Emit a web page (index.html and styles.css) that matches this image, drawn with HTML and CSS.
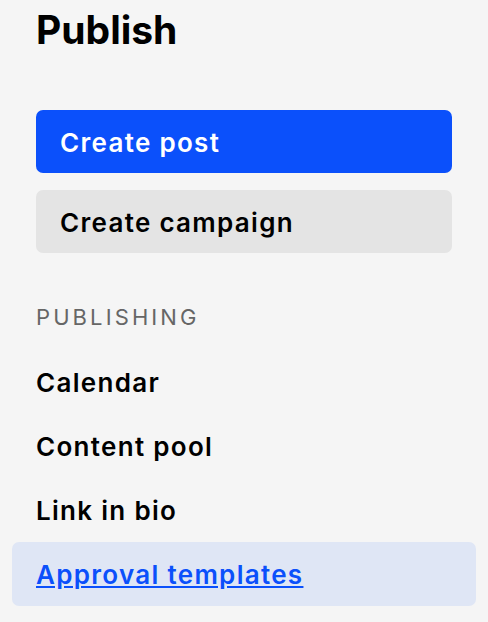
FILE: index.html
```html
<!DOCTYPE html>
<html lang="en">
<head>
    <meta charset="UTF-8">
    <meta name="viewport" content="width=device-width, initial-scale=1.0">
    <title>Publish</title>
    <link rel="stylesheet" href="styles.css">
</head>
<body>
    <div id="sidebar">
        <h1 class="title">Publish</h1>

        <div class="actions">
            <button class="btn btn-primary">Create post</button>
            <button class="btn btn-secondary">Create campaign</button>
        </div>

        <p class="section-label">PUBLISHING</p>

        <nav class="nav">
            <a class="nav-item" href="#">Calendar</a>
            <a class="nav-item" href="#">Content pool</a>
            <a class="nav-item" href="#">Link in bio</a>
            <a class="nav-item active" href="#">Approval templates</a>
        </nav>
    </div>
</body>
</html>
```

FILE: styles.css
```css
body {
    font-family: 'Inter', 'Liberation Sans', sans-serif;
    margin: 0;
    padding: 0;
    background-color: #f5f5f5;
    color: #000;
}

#sidebar {
    padding: 6px 12px 0;
}

.title {
    margin: 0 24px;
    font-size: 39px;
    line-height: 48px;
    font-weight: 700;
}

.actions {
    margin: 56px 24px 0;
    display: flex;
    flex-direction: column;
    gap: 17px;
}

.btn {
    display: block;
    height: 63px;
    padding: 2px 24px 0;
    border: none;
    border-radius: 7px;
    font-family: inherit;
    font-size: 26px;
    font-weight: 600;
    letter-spacing: 1.3px;
    text-align: left;
    cursor: pointer;
}

.btn-primary {
    background-color: #0b50fb;  /* brand blue */
    color: #fff;
}

.btn-secondary {
    background-color: #e4e4e4;
    color: #000;
}

.section-label {
    margin: 50px 24px 19px;
    font-size: 22px;
    line-height: 28px;
    font-weight: 400;
    letter-spacing: 3.1px;
    color: #666;
}

.nav {
    display: flex;
    flex-direction: column;
}

.nav-item {
    display: block;
    padding: 1px 24px 0;
    line-height: 63px;
    font-size: 26px;
    font-weight: 600;
    letter-spacing: 1.3px;
    color: #000;
    text-decoration: none;
    border-radius: 7px;
}

.nav-item.active {
    background-color: #dfe6f5;
    color: #0b50fb;
    text-decoration: underline;
}
```
